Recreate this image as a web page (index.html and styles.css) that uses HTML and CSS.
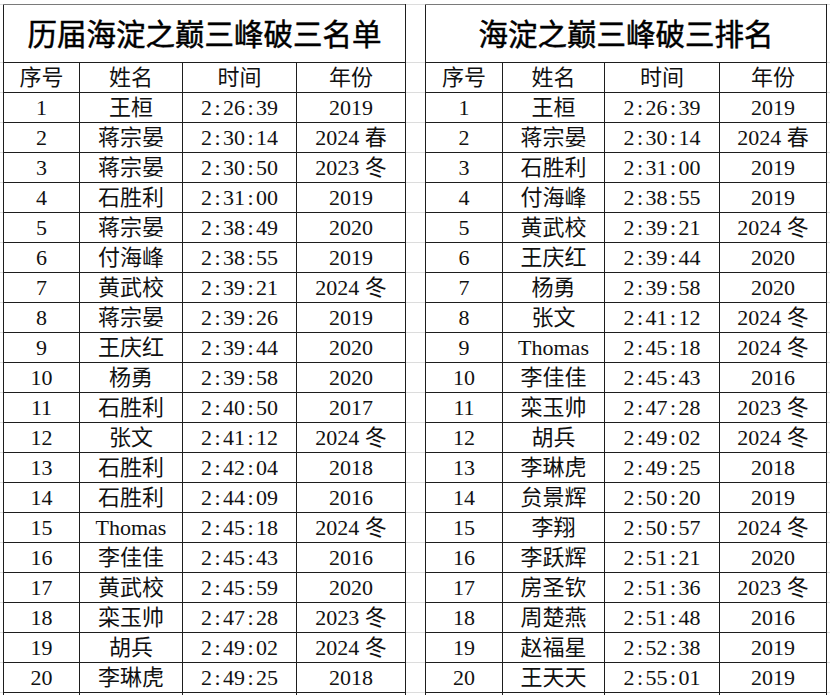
FILE: index.html
```html
<!DOCTYPE html>
<html lang="zh-CN">
<head>
<meta charset="utf-8">
<title>海淀之巅三峰破三</title>
<link rel="stylesheet" href="styles.css">
</head>
<body>
<div class="sheet">
  <table class="board board-left">
    <colgroup><col class="c1"><col class="c2"><col class="c3"><col class="c4"></colgroup>
    <tr class="title-row"><th colspan="4">历届海淀之巅三峰破三名单</th></tr>
    <tr class="head"><td>序号</td><td>姓名</td><td>时间</td><td>年份</td></tr>
    <tr><td>1</td><td>王桓</td><td>2<span class="c">:</span>26<span class="c">:</span>39</td><td>2019</td></tr>
    <tr><td>2</td><td>蒋宗晏</td><td>2<span class="c">:</span>30<span class="c">:</span>14</td><td>2024 春</td></tr>
    <tr><td>3</td><td>蒋宗晏</td><td>2<span class="c">:</span>30<span class="c">:</span>50</td><td>2023 冬</td></tr>
    <tr><td>4</td><td>石胜利</td><td>2<span class="c">:</span>31<span class="c">:</span>00</td><td>2019</td></tr>
    <tr><td>5</td><td>蒋宗晏</td><td>2<span class="c">:</span>38<span class="c">:</span>49</td><td>2020</td></tr>
    <tr><td>6</td><td>付海峰</td><td>2<span class="c">:</span>38<span class="c">:</span>55</td><td>2019</td></tr>
    <tr><td>7</td><td>黄武校</td><td>2<span class="c">:</span>39<span class="c">:</span>21</td><td>2024 冬</td></tr>
    <tr><td>8</td><td>蒋宗晏</td><td>2<span class="c">:</span>39<span class="c">:</span>26</td><td>2019</td></tr>
    <tr><td>9</td><td>王庆红</td><td>2<span class="c">:</span>39<span class="c">:</span>44</td><td>2020</td></tr>
    <tr><td>10</td><td>杨勇</td><td>2<span class="c">:</span>39<span class="c">:</span>58</td><td>2020</td></tr>
    <tr><td>11</td><td>石胜利</td><td>2<span class="c">:</span>40<span class="c">:</span>50</td><td>2017</td></tr>
    <tr><td>12</td><td>张文</td><td>2<span class="c">:</span>41<span class="c">:</span>12</td><td>2024 冬</td></tr>
    <tr><td>13</td><td>石胜利</td><td>2<span class="c">:</span>42<span class="c">:</span>04</td><td>2018</td></tr>
    <tr><td>14</td><td>石胜利</td><td>2<span class="c">:</span>44<span class="c">:</span>09</td><td>2016</td></tr>
    <tr><td>15</td><td>Thomas</td><td>2<span class="c">:</span>45<span class="c">:</span>18</td><td>2024 冬</td></tr>
    <tr><td>16</td><td>李佳佳</td><td>2<span class="c">:</span>45<span class="c">:</span>43</td><td>2016</td></tr>
    <tr><td>17</td><td>黄武校</td><td>2<span class="c">:</span>45<span class="c">:</span>59</td><td>2020</td></tr>
    <tr><td>18</td><td>栾玉帅</td><td>2<span class="c">:</span>47<span class="c">:</span>28</td><td>2023 冬</td></tr>
    <tr><td>19</td><td>胡兵</td><td>2<span class="c">:</span>49<span class="c">:</span>02</td><td>2024 冬</td></tr>
    <tr><td>20</td><td>李琳虎</td><td>2<span class="c">:</span>49<span class="c">:</span>25</td><td>2018</td></tr>
    <tr><td></td><td></td><td></td><td></td></tr>
  </table>

  <table class="board board-right">
    <colgroup><col class="d1"><col class="d2"><col class="d3"><col class="d4"></colgroup>
    <tr class="title-row"><th colspan="4">海淀之巅三峰破三排名</th></tr>
    <tr class="head"><td>序号</td><td>姓名</td><td>时间</td><td>年份</td></tr>
    <tr><td>1</td><td>王桓</td><td>2<span class="c">:</span>26<span class="c">:</span>39</td><td>2019</td></tr>
    <tr><td>2</td><td>蒋宗晏</td><td>2<span class="c">:</span>30<span class="c">:</span>14</td><td>2024 春</td></tr>
    <tr><td>3</td><td>石胜利</td><td>2<span class="c">:</span>31<span class="c">:</span>00</td><td>2019</td></tr>
    <tr><td>4</td><td>付海峰</td><td>2<span class="c">:</span>38<span class="c">:</span>55</td><td>2019</td></tr>
    <tr><td>5</td><td>黄武校</td><td>2<span class="c">:</span>39<span class="c">:</span>21</td><td>2024 冬</td></tr>
    <tr><td>6</td><td>王庆红</td><td>2<span class="c">:</span>39<span class="c">:</span>44</td><td>2020</td></tr>
    <tr><td>7</td><td>杨勇</td><td>2<span class="c">:</span>39<span class="c">:</span>58</td><td>2020</td></tr>
    <tr><td>8</td><td>张文</td><td>2<span class="c">:</span>41<span class="c">:</span>12</td><td>2024 冬</td></tr>
    <tr><td>9</td><td>Thomas</td><td>2<span class="c">:</span>45<span class="c">:</span>18</td><td>2024 冬</td></tr>
    <tr><td>10</td><td>李佳佳</td><td>2<span class="c">:</span>45<span class="c">:</span>43</td><td>2016</td></tr>
    <tr><td>11</td><td>栾玉帅</td><td>2<span class="c">:</span>47<span class="c">:</span>28</td><td>2023 冬</td></tr>
    <tr><td>12</td><td>胡兵</td><td>2<span class="c">:</span>49<span class="c">:</span>02</td><td>2024 冬</td></tr>
    <tr><td>13</td><td>李琳虎</td><td>2<span class="c">:</span>49<span class="c">:</span>25</td><td>2018</td></tr>
    <tr><td>14</td><td>贠景辉</td><td>2<span class="c">:</span>50<span class="c">:</span>20</td><td>2019</td></tr>
    <tr><td>15</td><td>李翔</td><td>2<span class="c">:</span>50<span class="c">:</span>57</td><td>2024 冬</td></tr>
    <tr><td>16</td><td>李跃辉</td><td>2<span class="c">:</span>51<span class="c">:</span>21</td><td>2020</td></tr>
    <tr><td>17</td><td>房圣钦</td><td>2<span class="c">:</span>51<span class="c">:</span>36</td><td>2023 冬</td></tr>
    <tr><td>18</td><td>周楚燕</td><td>2<span class="c">:</span>51<span class="c">:</span>48</td><td>2016</td></tr>
    <tr><td>19</td><td>赵福星</td><td>2<span class="c">:</span>52<span class="c">:</span>38</td><td>2019</td></tr>
    <tr><td>20</td><td>王天天</td><td>2<span class="c">:</span>55<span class="c">:</span>01</td><td>2019</td></tr>
    <tr><td></td><td></td><td></td><td></td></tr>
  </table>
</div>
</body>
</html>
```

FILE: styles.css
```css
html, body {
  margin: 0;
  padding: 0;
  background: #fff;
  overflow: hidden;
}

.sheet {
  display: flex;
  align-items: flex-start;
  gap: 19px;
  padding: 4px 0 0 3px;
  height: 691px;
  overflow: hidden;
  background:
    linear-gradient(#dcdcdc, #dcdcdc) 0 4px / 100% 1px no-repeat,
    linear-gradient(#fff, #fff) 0 0 / 100% 62px no-repeat,
    repeating-linear-gradient(to bottom, #dcdcdc 0 1px, transparent 1px 30px) 0 62px;
  font-family: "Liberation Serif", "Noto Sans CJK SC", serif;
  color: #111;
}

.board {
  border-collapse: collapse;
  table-layout: fixed;
  background: #fff;
  flex: none;
}

.board-left { width: 402px; }
.board-right { width: 401px; }

.c1 { width: 76px; }
.c2 { width: 103px; }
.c3 { width: 114px; }
.c4 { width: 109px; }

.d1 { width: 77px; }
.d2 { width: 102px; }
.d3 { width: 115px; }
.d4 { width: 107px; }

.board th,
.board td {
  border: 1px solid #1e1e1e;
  padding: 0;
  text-align: center;
  vertical-align: middle;
  white-space: nowrap;
  overflow: hidden;
}

.board tr { height: 30px; }

.board td {
  font-size: 22px;
  line-height: 28px;
  font-weight: normal;
}

.board .title-row { height: 58px; }

.board .title-row th {
  border-top-color: #7a7a7a;
  font-size: 29.5px;
  font-weight: normal;
  -webkit-text-stroke: 0.5px #000;
  line-height: 40px;
  padding-top: 3px;
  color: #000;
}

.c {
  margin: 0 2.4px;
}
```
